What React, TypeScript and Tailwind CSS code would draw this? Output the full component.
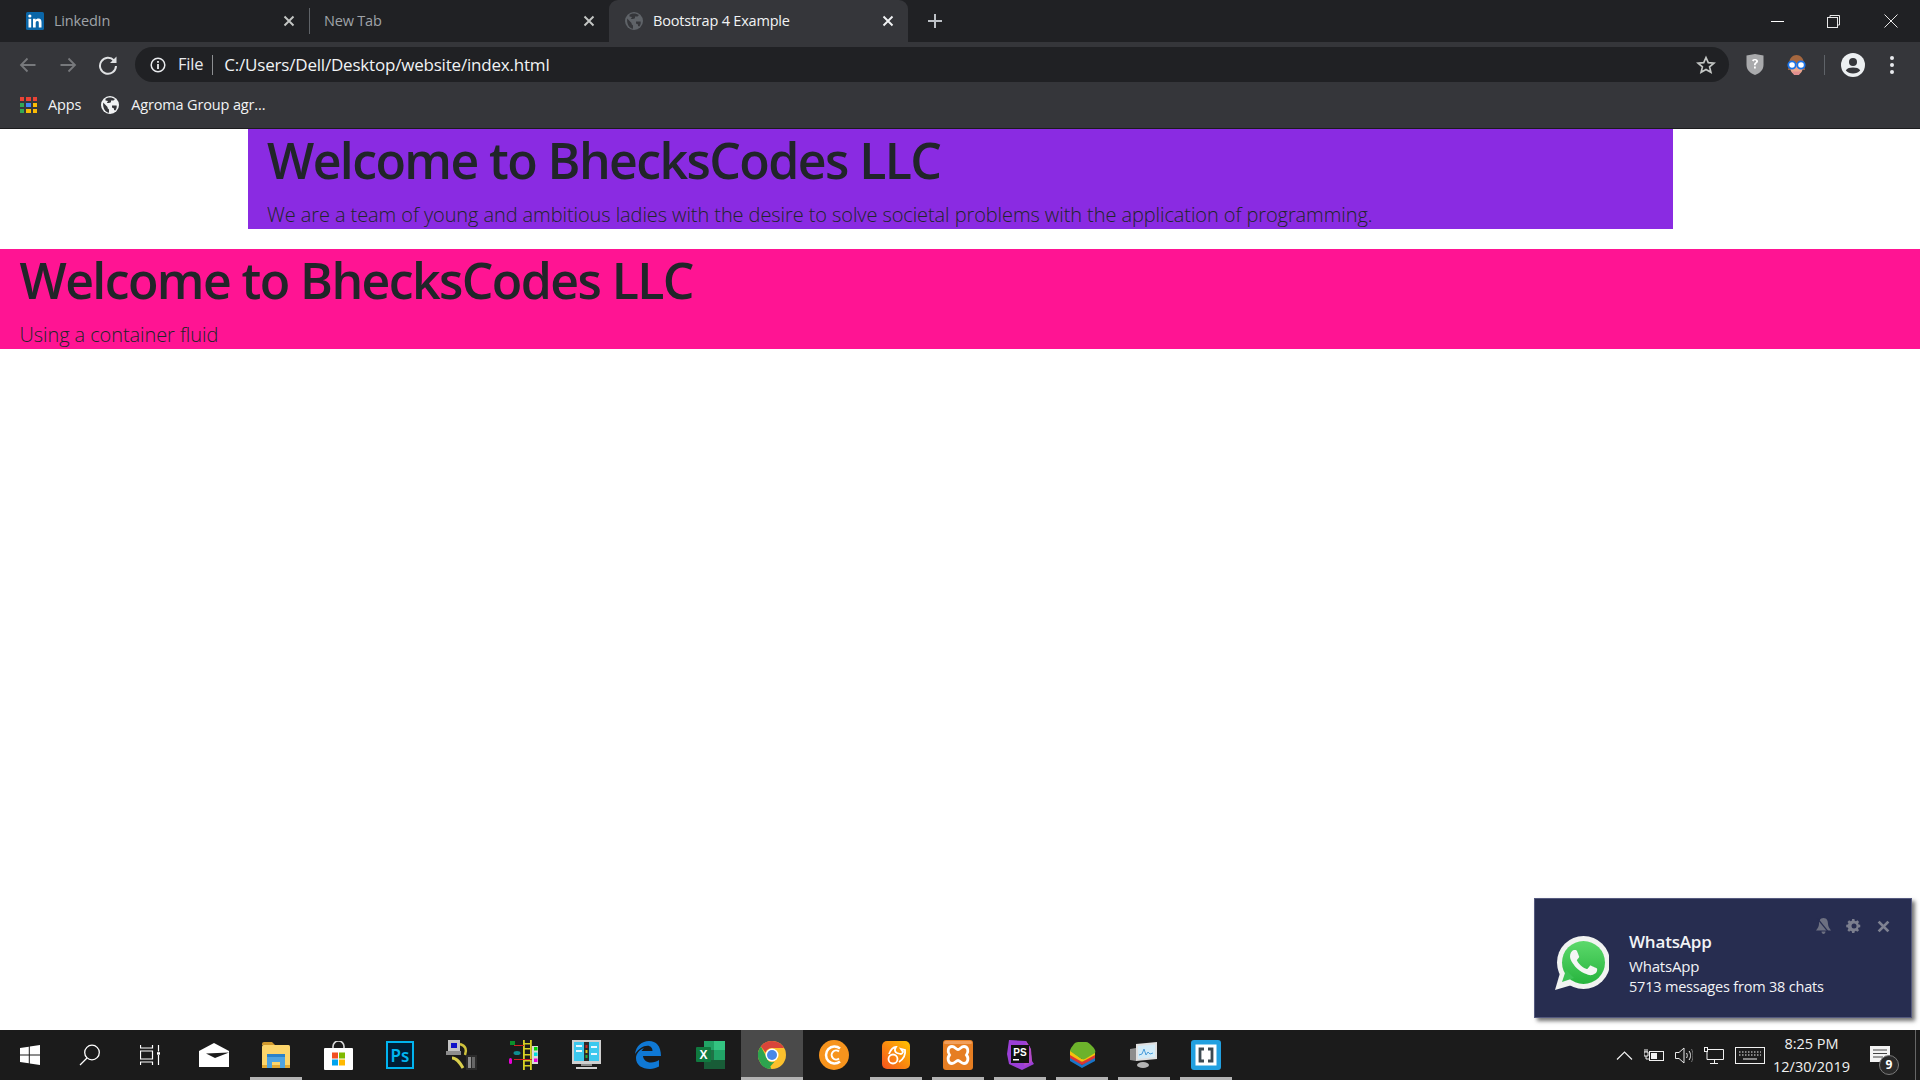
import React from "react";

const X = ({ c = "#c4c7c5", s = 12, w = 1.9 }: { c?: string; s?: number; w?: number }) => (
  <svg width={s} height={s} viewBox="0 0 12 12" fill="none" stroke={c} strokeWidth={w}><path d="M1.5 1.5l9 9M10.5 1.5l-9 9" /></svg>
);

const Globe = ({ bg, fg, s = 18 }: { bg: string; fg: string; s?: number }) => (
  <svg width={s} height={s} viewBox="0 0 18 18">
    <circle cx="9" cy="9" r="9" fill={fg} />
    <path d="M2.2 6.5L6.5 11l.2 1.2 1.3 1.4v3.2C4.5 16.300 1.500 12.500 2.200 6.500zM4.500 2.800c2.800-2 6.800-1.800 9.500.3l-1.500 1.400H10v1.700L8 7H5.800L7 5 4.500 4.500zM11 9.500h4.600c.5 2-.3 3.800-1.300 5l-1.300-.4V12.500L11 11.500z" fill={bg} />
  </svg>
);

const Tab = ({ icon, title, active, dim }: { icon?: React.ReactNode; title: string; active?: boolean; dim?: boolean }) => (
  <div className={`relative flex h-[42px] w-[299px] shrink-0 items-center pl-[15px] pr-[14px] ${active ? "rounded-t-[9px] bg-[#35363a]" : ""}`}>
    {icon && <span className="mr-[10px] flex h-[18px] w-[19px] items-center justify-center">{icon}</span>}
    <span className={`text-[14.5px] tracking-[-0.2px] ${active ? "text-[#f1f3f4]" : "text-[#9fa3a8]"} ${!icon ? "-ml-[1px]" : ""}`}>{title}</span>
    <span className="ml-auto flex"><X c={active ? "#f1f3f4" : dim ? "#b9bcbf" : "#c4c7c5"} /></span>
  </div>
);

const Linkedin = () => (
  <svg width="18" height="18" viewBox="0 0 18 18">
    <rect width="18" height="18" rx="1.500" fill="#0a66a8" />
    <rect x="2.500" y="6.800" width="2.700" height="8.700" fill="#fff" />
    <circle cx="3.850" cy="4" r="1.600" fill="#fff" />
    <path d="M7 6.800h2.600v1.200c.5-.8 1.500-1.400 2.800-1.400 2.400 0 3.100 1.500 3.100 3.800v5.100h-2.700v-4.600c0-1.100-.3-2-1.400-2-1.200 0-1.700.9-1.700 2v4.600H7z" fill="#fff" />
  </svg>
);

const AppsGrid = () => {
  const colors = ["#ea4335", "#ea4335", "#ea4335", "#34a853", "#4285f4", "#fbbc05", "#34a853", "#fbbc05", "#fbbc05"];
  return (
    <div className="grid h-[17px] w-[17px] grid-cols-3 gap-[2px]">
      {colors.map((c, i) => (
        <span key={i} className="h-[4.300px] w-[4.300px]" style={{ background: c }} />
      ))}
    </div>
  );
};

const Toolbar = () => (
  <div className="flex h-[45px] items-center bg-[#35363a] pb-[1px] pt-[1px]">
    <div className="ml-[18px] flex w-[117px] shrink-0 items-center">
      <svg className="mr-[20px]" width="20" height="20" viewBox="0 0 20 20" fill="none" stroke="#77797c" strokeWidth="1.800"><path d="M17.500 10H3M9.500 3.500L3 10l6.500 6.500" /></svg>
      <svg className="mr-[20px]" width="20" height="20" viewBox="0 0 20 20" fill="none" stroke="#77797c" strokeWidth="1.800"><path d="M2.500 10H17M10.500 3.500L17 10l-6.500 6.500" /></svg>
      <svg width="20" height="20" viewBox="0 0 20 20" fill="none"><path d="M16 5.500A8 8 0 1 0 18 11" stroke="#dfe1e3" strokeWidth="2" /><path d="M18.500 1.500V8H12z" fill="#dfe1e3" /></svg>
    </div>
    <div className="flex h-[35px] w-[1594px] shrink-0 items-center rounded-full bg-[#202124] pl-[15px] pr-[13px]">
      <svg width="16" height="16" viewBox="0 0 16 16" fill="none"><circle cx="8" cy="8" r="6.800" stroke="#e8eaed" strokeWidth="1.500" /><rect x="7.100" y="7" width="1.800" height="5" fill="#e8eaed" /><rect x="7.100" y="4" width="1.800" height="1.800" fill="#e8eaed" /></svg>
      <span className="ml-[12px] text-[16.500px] tracking-[-0.2px] text-[#e8eaed]">File</span>
      <span className="ml-[9px] h-[20px] w-[1px] bg-[#8d8f92]" />
      <span className="ml-[11px] text-[17px] tracking-[-0.2px] text-[#f1f3f4]">C:/Users/Dell/Desktop/website/index.html</span>
      <svg className="ml-auto" width="20" height="20" viewBox="0 0 24 24" fill="none" stroke="#c4c7c5" strokeWidth="2" strokeLinejoin="miter"><path d="M12 3l2.700 6.200 6.800.6-5.200 4.400 1.600 6.600L12 17.300l-5.900 3.500 1.600-6.600-5.200-4.400 6.800-.6z" /></svg>
    </div>
    <div className="ml-[17px] flex items-center">
      <svg width="18" height="21" viewBox="0 0 18 21"><path d="M9 0l8.500 1.500V11c0 5-4 8.500-8.500 10C4.500 19.500.5 16 .5 11V1.500z" fill="#a9aaac" /><path d="M6 6.500C6.500 4.500 11.500 4.300 12 7c.300 2-2.300 2.200-2.300 4.300H8c0-3 2.300-2.900 2.100-4.100C9.900 6 8 6 7.700 7.400zM8 12.500h1.800v1.900H8z" fill="#fff" /></svg>
      <svg className="ml-[23px]" width="19" height="20" viewBox="0 0 19 20">
        <path d="M2 9C2 3 6 0 9.500 0S17 3 17 9l1 6H1z" fill="#a5673f" />
        <ellipse cx="9.500" cy="14" rx="6" ry="5.500" fill="#eba98e" />
        <path d="M5 16.500h9l-2 3.500H7z" fill="#e28f8f" />
        <circle cx="5" cy="10" r="3.700" fill="#fff" stroke="#1a73e8" strokeWidth="1.800" />
        <circle cx="14" cy="10" r="3.700" fill="#fff" stroke="#1a73e8" strokeWidth="1.800" />
      </svg>
      <span className="ml-[18px] h-[20px] w-[1px] bg-[#5f6368]" />
      <svg className="ml-[16px]" width="24" height="24" viewBox="0 0 24 24"><circle cx="12" cy="12" r="12" fill="#eceff1" /><circle cx="12" cy="9" r="4" fill="#35363a" /><path d="M4.800 17.500C6 15 9 14.400 12 14.400s6 .6 7.200 3.100C17.500 19.500 15 20.500 12 20.500s-5.500-1-7.200-3z" fill="#35363a" /></svg>
      <span className="ml-[25px] flex flex-col gap-[3px]">
        <span className="h-[4px] w-[4px] rounded-full bg-[#e8eaed]" />
        <span className="h-[4px] w-[4px] rounded-full bg-[#e8eaed]" />
        <span className="h-[4px] w-[4px] rounded-full bg-[#e8eaed]" />
      </span>
    </div>
  </div>
);

const Start = () => (
  <svg width="20" height="20" viewBox="0 0 20 20" fill="#fff"><path d="M0 3l8.800-1.300v7.800H0zM9.800 1.500L20 0v9.500H9.800zM0 10.500h8.800v7.800L0 17zM9.800 10.500H20V20L9.800 18.500z" /></svg>
);
const Search = () => (
  <svg width="22" height="22" viewBox="0 0 22 22" fill="none" stroke="#fff" strokeWidth="1.300"><circle cx="13" cy="8.500" r="7.300" /><path d="M8 14L1 21" /></svg>
);
const TaskView = () => (
  <svg width="20" height="20" viewBox="0 0 20 20" fill="none" stroke="#fff" strokeWidth="1.200"><path d="M.5 0v3h12V0M.5 20v-3h12v3M.5 6h12v8H.5zM18.500 0v6.500M18.500 10v10" /><rect x="17" y="7.200" width="3" height="2.500" fill="#fff" stroke="none" /></svg>
);
const Mail = () => (
  <svg width="30" height="24" viewBox="0 0 30 24"><path d="M15 0l15 8v16H0V8z" fill="#fff" /><path d="M7 10.500l23-1-14 5.500 10 5z" fill="#1b1b1b" /></svg>
);
const Explorer = () => (
  <svg width="28" height="26" viewBox="0 0 28 26"><path d="M0 2a2 2 0 0 1 2-2h8l3 3H0z" fill="#d19a2e" /><rect y="3" width="28" height="23" rx="1.500" fill="#fcd56b" /><rect y="23" width="28" height="3" fill="#e2a933" /><path d="M5 13h18l0 13h-5v-6h-8v6H5z" fill="#4fa3e0" /><rect x="5" y="12" width="18" height="3" fill="#2b82c9" /></svg>
);
const Store = () => (
  <svg width="29" height="29" viewBox="0 0 29 29"><path d="M9 8V5.500a5.500 5.500 0 0 1 11 0V8" fill="none" stroke="#d8d8d8" strokeWidth="1.600" /><rect y="7" width="29" height="22" rx="1" fill="#fff" /><rect x="8" y="11.500" width="6" height="6" fill="#f25022" /><rect x="15" y="11.500" width="6" height="6" fill="#7fba00" /><rect x="8" y="18.500" width="6" height="6" fill="#00a4ef" /><rect x="15" y="18.500" width="6" height="6" fill="#ffb900" /></svg>
);
const Ps = () => (
  <div className="flex h-[28px] w-[28px] items-center justify-center border-2 border-[#01b4f0] bg-[#001e36] text-[17px] font-semibold leading-none text-[#01b4f0] [font-family:'Noto_Sans',sans-serif]">Ps</div>
);
const KeyTool = () => (
  <svg width="32" height="30" viewBox="0 0 32 30">
    <path d="M6 18c5 0 8 5 11 10" stroke="#d9cf4d" strokeWidth="3" fill="none" /><path d="M14 4c6 2 7 6 5 11" stroke="#cfc23c" strokeWidth="2.500" fill="none" />
    <rect x="2" y="0" width="12" height="11" fill="#c3c3c3" /><rect x="5" y="3" width="6" height="5" fill="#0f12c9" /><rect y="11" width="15" height="4" fill="#8d8d8d" />
    <rect x="20" y="15" width="11" height="15" fill="#2b2b2b" /><rect x="22" y="17" width="3" height="11" fill="#8f8f8f" /><rect x="26" y="17" width="3" height="11" fill="#666" />
  </svg>
);
const Ladder = () => (
  <svg width="30" height="30" viewBox="0 0 30 30">
    <rect x="14" y="0" width="1.800" height="30" fill="#d8d023" /><rect x="21" y="0" width="1.800" height="30" fill="#d8d023" />
    {[3, 8, 14, 20, 25].map((y) => <rect key={y} x="14" y={y} width="8" height="1.500" fill="#d8d023" />)}
    <rect x="1" y="1" width="5" height="4" fill="#0b8f2a" /><rect x="5" y="5" width="10" height="1" fill="#d02121" />
    <rect x="23" y="6" width="6" height="18" fill="#d9d9d9" /><rect x="25" y="7" width="3.500" height="3.500" fill="#00d800" /><rect x="25" y="12.500" width="3.500" height="3.500" fill="#00dede" /><rect x="25" y="18.500" width="3.500" height="3.500" fill="#e800d8" />
    <ellipse cx="8" cy="13" rx="3.500" ry="2" fill="#0f8e91" /><rect x="0" y="18" width="3" height="6" rx="1.500" fill="#e800d8" /><rect x="5" y="19" width="18" height="1" fill="#d02121" />
  </svg>
);
const Monitor = () => (
  <svg width="29" height="30" viewBox="0 0 29 30">
    <rect width="29" height="24" fill="#cfcfcf" /><rect x="2" y="2" width="25" height="19" fill="#3cc8ee" />
    <rect x="12" y="2" width="5" height="19" fill="#2b2b2b" /><rect x="13.500" y="5" width="2" height="3" fill="#cf2020" /><rect x="13.500" y="10" width="2" height="3" fill="#d8c320" /><rect x="13.500" y="15" width="2" height="3" fill="#20b040" />
    <rect x="4" y="5" width="6" height="2" fill="#e8f8ff" /><rect x="4" y="10" width="6" height="2" fill="#e8f8ff" /><rect x="19" y="6" width="6" height="2" fill="#e8f8ff" /><rect x="19" y="13" width="6" height="2" fill="#e8f8ff" />
    <rect x="9" y="24" width="11" height="2" fill="#8c8c8c" /><rect x="4" y="27" width="21" height="2" fill="#d0d0d0" />
  </svg>
);
const Edge = () => (
  <svg width="26" height="28" viewBox="0 0 26 28"><path d="M0 13C1 5 7 0 14 0c7 0 12 5 12 15H8c.500 4 3.500 6.500 8 6.500 3 0 6-1 8-2.500v6.500C21 27 18 28 15 28 7 28 1 24 1 17c0-2 .500-3 1-4 1.500-3 4-5 7-6-1 1-2 2.500-2.500 3h11c0-3-2-5.200-5-5.200C8 4.800 3.500 8 0 13z" fill="#0f78d4" /></svg>
);
const Excel = () => (
  <svg width="29" height="28" viewBox="0 0 29 28"><path d="M8 0h19a2 2 0 0 1 2 2v24a2 2 0 0 1-2 2H8z" fill="#1f7246" /><rect x="18" y="0" width="11" height="9" fill="#33c481" /><rect x="8" y="0" width="10" height="9" fill="#21a366" /><rect x="18" y="9" width="11" height="10" fill="#21a366" /><rect x="8" y="19" width="21" height="9" fill="#185c37" /><rect y="6" width="15" height="15" rx="1" fill="#10793f" /><text x="7.500" y="18" textAnchor="middle" fontSize="12" fontWeight="700" fill="#fff" fontFamily="Liberation Sans">X</text></svg>
);
const Chrome = () => (
  <svg width="28" height="28" viewBox="0 0 28 28">
    <circle cx="14" cy="14" r="14" fill="#fbc02d" />
    <path d="M14 0a14 14 0 0 1 12.100 7H14a7 7 0 0 0-6.500 4.500L2.900 5.400A14 14 0 0 1 14 0z" fill="#d9443a" />
    <path d="M2.900 5.400l5.900 11.200 4.500 11.400A14 14 0 0 1 2.900 5.400z" fill="#2da44e" />
    <path d="M8 17.500a7 7 0 0 0 8.500 3.200L10 28a14 14 0 0 1-7.500-5.500z" fill="#2da44e" />
    <circle cx="14" cy="14" r="6.500" fill="#fff" /><circle cx="14" cy="14" r="5" fill="#4a87e8" />
  </svg>
);
const Ccleaner = () => (
  <svg width="30" height="30" viewBox="0 0 30 30" fill="none"><circle cx="15" cy="15" r="15" fill="#f7941d" /><path d="M21 8.500a8.500 8.500 0 1 0 0 13" stroke="#fff" strokeWidth="2.500" /><path d="M20 11.500a4.500 4.500 0 1 0 0 7" stroke="#fff" strokeWidth="2" /></svg>
);
const Uc = () => (
  <svg width="28" height="28" viewBox="0 0 28 28"><defs><linearGradient id="ucg" x1="0" y1="1" x2="1" y2="0"><stop offset="0" stopColor="#f4511e" /><stop offset="1" stopColor="#ffc400" /></linearGradient></defs><rect width="28" height="28" rx="5" fill="url(#ucg)" /><circle cx="11" cy="18" r="4.500" fill="none" stroke="#fff" strokeWidth="1.800" /><path d="M7 13c2-5 5-7 7-7-2 3-1 5 1 6 3 1 5 2 6-1l-2-3 4 1c1 6-3 10-6 12" fill="none" stroke="#fff" strokeWidth="1.800" /></svg>
);
const Xampp = () => (
  <svg width="30" height="30" viewBox="0 0 30 30" fill="none"><rect width="30" height="30" rx="3" fill="#e67e22" /><rect x="1" y="1" width="28" height="3" rx="1.500" fill="#f29f5a" /><path d="M9 6.500c3 0 4 3 6 3s3-3 6-3c4 0 5 5 2.500 8.500 2.500 3 1.500 8.500-2.500 8.500-3 0-4-3-6-3s-3 3-6 3c-4 0-5-5.500-2.500-8.500C4 11.500 5 6.500 9 6.500z" stroke="#fff" strokeWidth="2.800" /></svg>
);
const PhpStorm = () => (
  <svg width="28" height="30" viewBox="0 0 28 30"><path d="M3 0l17 1 4 6 2 14 2 3-12 6L3 24 1 14z" fill="#9b3fd6" /><path d="M20 1l5 8 1 13-8 4z" fill="#b24ac6" /><rect x="5" y="5" width="18" height="18" fill="#111" /><text x="14" y="15.500" textAnchor="middle" fontSize="10" fontWeight="700" fill="#fff" fontFamily="Liberation Sans">PS</text><rect x="7" y="19" width="6" height="1.500" fill="#fff" /></svg>
);
const BlueStacks = () => (
  <svg width="27" height="26" viewBox="0 0 27 26"><path d="M1 14l12 9 13-9v5L13 26 1 19z" fill="#1976c9" /><path d="M1 11l12 9 13-9v5L13 23 1 16z" fill="#d93636" /><path d="M1 8l12 9 13-9v5L13 20 1 13z" fill="#f4c20d" /><path d="M6 1c1-1 3-1 4-1h7c2 0 4 2 6 4 3 3 4 5 3 7l-10 6c-2 1-3 0-5-1L1 9c0-2 3-6 5-8z" fill="#6cb22b" /></svg>
);
const PerfMon = () => (
  <svg width="28" height="26" viewBox="0 0 28 26"><path d="M6 2l21-2v17L6 19z" fill="#e0e0e0" /><path d="M8 4l17-1.500V15L8 17z" fill="#d4ecf8" /><path d="M9 13l3-1 2-5 2 6 2-3 2 2 3-1" fill="none" stroke="#4a9ddb" strokeWidth="1" /><path d="M0 7l6-1v13l-6-1z" fill="#8d8d8d" /><ellipse cx="13" cy="23" rx="6" ry="3" fill="#b4b4b4" /></svg>
);
const Brackets = () => (
  <svg width="30" height="30" viewBox="0 0 30 30" fill="none"><rect width="30" height="30" rx="3" fill="#22a0e0" /><rect x="4.500" y="4.500" width="21" height="21" fill="#fff" /><path d="M13 9H9v12h4M17 9h4v12h-4" stroke="#3d4a52" strokeWidth="2.800" /></svg>
);

const Tbtn = ({ children, on, active }: { children: React.ReactNode; on?: boolean; active?: boolean }) => (
  <div className={`relative flex h-[50px] w-[62px] shrink-0 items-center justify-center ${active ? "bg-[#4a4a4a]" : ""}`}>
    {children}
    {on && <span className="absolute bottom-0 left-[5px] right-[5px] h-[3px] bg-[#b3b3b3]" />}
    {active && <span className="absolute bottom-0 left-0 right-0 h-[3px] bg-[#b3b3b3]" />}
  </div>
);

const WhatsApp = () => (
  <svg width="54" height="54" viewBox="0 0 54 54">
    <defs><linearGradient id="wag" x1="0" y1="0" x2="0" y2="1"><stop offset="0" stopColor="#5cd96b" /><stop offset="1" stopColor="#27b43e" /></linearGradient></defs>
    <circle cx="28.500" cy="26.500" r="26.500" fill="#f1f3f1" />
    <path d="M0 54l5-17 12 12z" fill="#f1f3f1" />
    <circle cx="28.500" cy="26.500" r="21.500" fill="url(#wag)" />
    <path d="M7 46l4-12 8 8z" fill="#3dc255" />
    <g transform="translate(1.500 -.5) scale(2.250)"><path d="M17.472 14.382c-.297-.149-1.758-.867-2.03-.967-.273-.099-.471-.148-.67.15-.197.297-.767.966-.94 1.164-.173.199-.347.223-.644.075-.297-.15-1.255-.463-2.39-1.475-.883-.788-1.48-1.761-1.653-2.059-.173-.297-.018-.458.13-.606.134-.133.298-.347.446-.52.149-.174.198-.298.298-.497.099-.198.05-.371-.025-.52-.075-.149-.669-1.612-.916-2.207-.242-.579-.487-.5-.669-.51-.173-.008-.371-.01-.57-.01-.198 0-.52.074-.792.372-.272.297-1.04 1.016-1.04 2.479 0 1.462 1.065 2.875 1.213 3.074.149.198 2.096 3.2 5.077 4.487.709.306 1.262.489 1.694.625.712.227 1.36.195 1.871.118.571-.085 1.758-.719 2.006-1.413.248-.694.248-1.289.173-1.413-.074-.124-.272-.198-.57-.347z" fill="#f4f6f4" /></g>
  </svg>
);

const Notification = () => (
  <div className="absolute bottom-[62px] right-[8px] flex h-[120px] w-[378px] items-start border border-[#54597e] bg-[#272d50] pl-[20px] shadow-[3px_3px_4px_rgba(0,0,0,0.55)]">
    <div className="mt-[37px] shrink-0"><WhatsApp /></div>
    <div className="ml-[20px] mt-[31px] flex flex-col text-[#f2f3f6]">
      <span className="text-[17px] font-semibold leading-[23px] tracking-[-0.2px]">WhatsApp</span>
      <span className="mt-[3px] text-[15px] leading-[20px] tracking-[-0.2px]">WhatsApp</span>
      <span className="mt-[1px] text-[14.5px] leading-[20px] tracking-[-0.2px]">5713 messages from 38 chats</span>
    </div>
    <div className="absolute right-[21px] top-[19px] flex items-center gap-[15px]">
      <svg width="15" height="16" viewBox="0 0 15 16"><path d="M7.500 0C11 0 12 3 12 6c0 3 2 5 3 6.500H0C1 11 3 9 3 6c0-3 1-6 4.500-6zM5.500 13.500h4c0 1.500-1 2.500-2 2.500s-2-1-2-2.500z" fill="#6d7081" /><path d="M1 0l13 16" stroke="#272d50" strokeWidth="1.200" /></svg>
      <svg width="16" height="16" viewBox="0 0 16 16"><path d="M6.500 0h3l.4 2.200 1.600.7L13.400 1.600l2.100 2.100-1.300 1.900.7 1.600 2.100.3v3l-2.200.4-.7 1.600 1.300 1.900-2.100 2.100-1.900-1.300-1.600.7L9.500 18h-3l-.4-2.200-1.600-.7-1.900 1.300L.5 14.300l1.300-1.900-.7-1.600L-1 10.500v-3l2.200-.4.700-1.600L.6 3.700 2.700 1.600l1.900 1.300 1.600-.7z" fill="#7b7e8e" transform="translate(1 1) scale(.78)" /><circle cx="8" cy="8" r="2.500" fill="#272d50" /></svg>
      <X c="#7f8292" s={13} w={2.600} />
    </div>
  </div>
);

export default function App() {
  return (
    <div className="relative flex h-[1080px] w-[1920px] flex-col overflow-hidden bg-white [font-family:'Open_Sans','Noto_Sans',sans-serif]">
      <div className="flex h-[42px] shrink-0 items-center bg-[#202124] pl-[10px]">
        <Tab title="LinkedIn" icon={<Linkedin />} />
        <div className="h-[26px] w-[1px] shrink-0 bg-[#5f6368]" />
        <Tab title="New Tab" />
        <Tab title="Bootstrap 4 Example" active icon={<Globe bg="#35363a" fg="#5f6368" />} />
        <svg className="ml-[19px] shrink-0" width="16" height="16" viewBox="0 0 16 16" fill="none" stroke="#bdc1c6" strokeWidth="2"><path d="M8 1v14M1 8h14" /></svg>
        <div className="ml-auto flex items-center pr-[22px]">
          <span className="h-[1px] w-[13px] bg-white" />
          <svg className="ml-[43px]" width="13" height="13" viewBox="0 0 13 13" fill="none" stroke="#e8e8e8" strokeWidth="1"><rect x=".5" y="2.500" width="10" height="10" /><path d="M3 2.500V.5h9.500V10h-2" /></svg>
          <svg className="ml-[44px]" width="14" height="14" viewBox="0 0 14 14" fill="none" stroke="#e8e8e8" strokeWidth="1"><path d="M.5.5l13 13M13.500.5l-13 13" /></svg>
        </div>
      </div>
      <Toolbar />
      <div className="flex h-[41px] shrink-0 items-center bg-[#35363a] pb-[5px] pl-[20px] text-[14.5px] tracking-[-0.15px] text-[#f1f3f4]">
        <AppsGrid />
        <span className="ml-[11px]">Apps</span>
        <span className="ml-[20px] flex"><Globe bg="#35363a" fg="#f1f3f4" /></span>
        <span className="ml-[12px]">Agroma Group agr...</span>
      </div>
      <div className="h-[1px] shrink-0 bg-[#1c1c1e]" />
      <main className="min-h-0 flex-1 text-[#212529]">
        <section className="mx-auto w-[1425px] bg-[#8a2be2] px-[19.500px]">
          <h1 className="h-[70px] pt-[1px] text-[50px] font-semibold leading-[60px] tracking-[-1.6px]">Welcome to BhecksCodes LLC</h1>
          <p className="pt-[1px] text-[20px] font-light leading-[29px] tracking-[-0.09px]">We are a team of young and ambitious ladies with the desire to solve societal problems with the application of programming.</p>
        </section>
        <section className="mt-[20px] bg-[#ff1493] px-[19.500px]">
          <h1 className="h-[70px] pt-[1px] text-[50px] font-semibold leading-[60px] tracking-[-1.6px]">Welcome to BhecksCodes LLC</h1>
          <p className="pt-[1px] text-[20px] font-light leading-[29px] tracking-[-0.09px]">Using a container fluid</p>
        </section>
      </main>
      <footer className="flex h-[50px] shrink-0 items-center bg-[#1b1b1b]">
        <div className="flex h-[50px] w-[60px] shrink-0 items-center justify-center"><Start /></div>
        <div className="flex h-[50px] w-[60px] shrink-0 items-center justify-center"><Search /></div>
        <div className="mr-[3px] flex h-[50px] w-[60px] shrink-0 items-center justify-center"><TaskView /></div>
        <Tbtn><Mail /></Tbtn>
        <Tbtn on><Explorer /></Tbtn>
        <Tbtn><Store /></Tbtn>
        <Tbtn><Ps /></Tbtn>
        <Tbtn><KeyTool /></Tbtn>
        <Tbtn><Ladder /></Tbtn>
        <Tbtn><Monitor /></Tbtn>
        <Tbtn><Edge /></Tbtn>
        <Tbtn><Excel /></Tbtn>
        <Tbtn active><Chrome /></Tbtn>
        <Tbtn><Ccleaner /></Tbtn>
        <Tbtn on><Uc /></Tbtn>
        <Tbtn on><Xampp /></Tbtn>
        <Tbtn on><PhpStorm /></Tbtn>
        <Tbtn on><BlueStacks /></Tbtn>
        <Tbtn on><PerfMon /></Tbtn>
        <Tbtn on><Brackets /></Tbtn>
        <div className="ml-auto flex h-[50px] items-center text-[#f0f0f0]">
          <svg width="17" height="9" viewBox="0 0 17 9" fill="none" stroke="#f0f0f0" strokeWidth="1.200"><path d="M1 8.500l7.500-7.500 7.500 7.500" /></svg>
          <svg className="ml-[11px]" width="20" height="13" viewBox="0 0 20 13" fill="none"><rect x="5.500" y="2.500" width="14" height="9" stroke="#f0f0f0" /><rect x="7" y="4" width="6" height="6" fill="#f0f0f0" /><path d="M0 3h4v4H0zM1 0v3M3 0v3M2 7v3h4" stroke="#f0f0f0" /></svg>
          <svg className="ml-[11px]" width="18" height="17" viewBox="0 0 18 17" fill="none" stroke="#e8e8e8"><path d="M.5 5.500H4L9 1v15l-5-4.500H.5z" /><path d="M11.500 6c1 1.500 1 3.500 0 5M14 4c2 2.500 2 6.500 0 9" /><path d="M16.500 2c2 4 2 9 0 13" stroke="#777" /></svg>
          <svg className="ml-[11px]" width="20" height="17" viewBox="0 0 20 17" fill="none" stroke="#f0f0f0"><path d="M3 2.500h16.500v10H3z" /><path d="M6 16.500h8M10.500 12.500v4" /><rect x=".5" y=".5" width="3" height="4" fill="#1b1b1b" /></svg>
          <svg className="ml-[11px]" width="30" height="17" viewBox="0 0 30 17" fill="none" stroke="#f0f0f0"><rect x=".5" y=".5" width="29" height="16" /><path d="M4 5h22M4 8h22" strokeDasharray="1.500 1.500" /><path d="M8 12h14" /></svg>
          <div className="ml-[8px] flex w-[77px] flex-col items-center text-[14.500px] leading-[23px]">
            <span>8:25 PM</span>
            <span>12/30/2019</span>
          </div>
          <div className="relative ml-[20px] mr-[30px] flex">
            <svg width="20" height="19" viewBox="0 0 20 19"><path d="M0 0h20v16H0z" fill="#f4f4f4" /><path d="M3 4h14M3 7.500h14M3 11h10" stroke="#444" /></svg>
            <span className="absolute left-[9px] top-[9px] flex h-[20px] w-[20px] items-center justify-center rounded-full border border-[#7a7a7a] bg-[#2a2a2a] text-[12px] font-bold text-white">9</span>
          </div>
          <span className="absolute bottom-0 right-[4px] h-[50px] w-[1px] bg-[#666]" />
        </div>
      </footer>
      <Notification />
    </div>
  );
}
